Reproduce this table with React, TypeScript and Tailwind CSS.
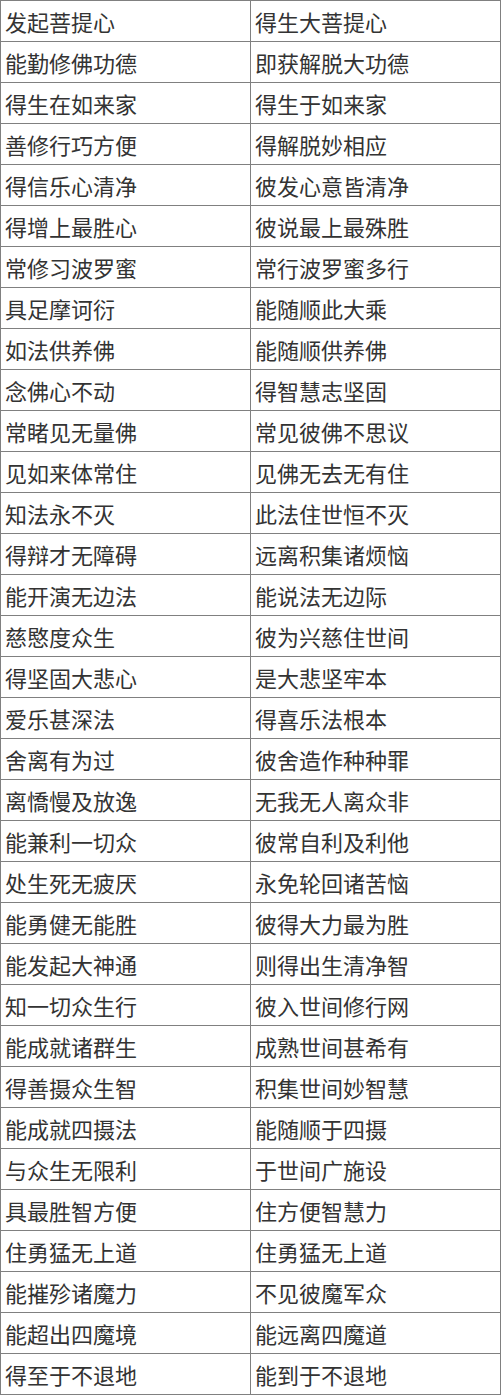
const rows: [string, string][] = [
  ["发起菩提心", "得生大菩提心"],
  ["能勤修佛功德", "即获解脱大功德"],
  ["得生在如来家", "得生于如来家"],
  ["善修行巧方便", "得解脱妙相应"],
  ["得信乐心清净", "彼发心意皆清净"],
  ["得增上最胜心", "彼说最上最殊胜"],
  ["常修习波罗蜜", "常行波罗蜜多行"],
  ["具足摩诃衍", "能随顺此大乘"],
  ["如法供养佛", "能随顺供养佛"],
  ["念佛心不动", "得智慧志坚固"],
  ["常睹见无量佛", "常见彼佛不思议"],
  ["见如来体常住", "见佛无去无有住"],
  ["知法永不灭", "此法住世恒不灭"],
  ["得辩才无障碍", "远离积集诸烦恼"],
  ["能开演无边法", "能说法无边际"],
  ["慈愍度众生", "彼为兴慈住世间"],
  ["得坚固大悲心", "是大悲坚牢本"],
  ["爱乐甚深法", "得喜乐法根本"],
  ["舍离有为过", "彼舍造作种种罪"],
  ["离憍慢及放逸", "无我无人离众非"],
  ["能兼利一切众", "彼常自利及利他"],
  ["处生死无疲厌", "永免轮回诸苦恼"],
  ["能勇健无能胜", "彼得大力最为胜"],
  ["能发起大神通", "则得出生清净智"],
  ["知一切众生行", "彼入世间修行网"],
  ["能成就诸群生", "成熟世间甚希有"],
  ["得善摄众生智", "积集世间妙智慧"],
  ["能成就四摄法", "能随顺于四摄"],
  ["与众生无限利", "于世间广施设"],
  ["具最胜智方便", "住方便智慧力"],
  ["住勇猛无上道", "住勇猛无上道"],
  ["能摧殄诸魔力", "不见彼魔军众"],
  ["能超出四魔境", "能远离四魔道"],
  ["得至于不退地", "能到于不退地"],
];

export default function App() {
  return (
    <div className="bg-white w-[501px]">
      <div
        className="grid grid-cols-2 border-l border-t border-[#808080] text-[22px] leading-none text-[#333333]"
        style={{ fontFamily: '"Noto Sans CJK SC", "Noto Sans", sans-serif' }}
      >
        {rows.map(([a, b], i) => (
          <div key={i} className="contents">
            <div className="h-[41px] border-r border-b border-[#808080] flex items-center pl-1">
              {a}
            </div>
            <div className="h-[41px] border-r border-b border-[#808080] flex items-center pl-1">
              {b}
            </div>
          </div>
        ))}
      </div>
    </div>
  );
}
